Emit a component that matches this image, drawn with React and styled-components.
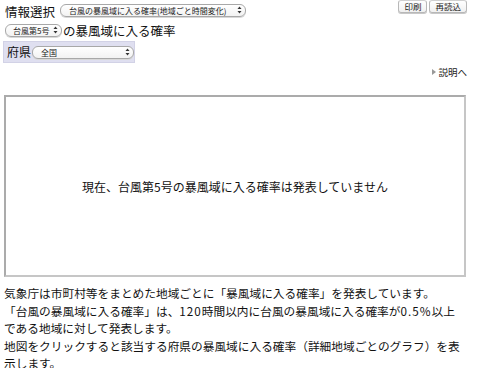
import React from "react";
import styled, { createGlobalStyle } from "styled-components";

const Global = createGlobalStyle`
  html, body { margin: 0; padding: 0; background: #fff; }
  body {
    font-family: "Noto Sans CJK JP", "Noto Sans", sans-serif;
    color: #111;
  }
`;

const Page = styled.div`
  width: 463px;
  padding: 0 0 0 4px;
  display: flex;
  flex-direction: column;
`;

const TopRow = styled.div`
  display: flex;
  align-items: center;
  height: 20px;
`;

const Title = styled.span`
  font-size: 12.5px;
  line-height: 16px;
  margin: 3px 5px 0 1px;
  white-space: nowrap;
`;

const Spacer = styled.div`
  flex: 1;
`;

const Buttons = styled.div`
  display: flex;
  gap: 2px;
  align-self: flex-start;
`;

const Btn = styled.button`
  font-family: "Noto Sans CJK JP", sans-serif;
  font-size: 8.5px;
  line-height: 11px;
  height: 13px;
  padding: 0 5px;
  border: 1px solid #b8b8b8;
  border-top-color: #d0d0d0;
  border-radius: 3px;
  background: linear-gradient(#ffffff, #f0f0f0);
  color: #222;
  box-shadow: 0 1px 0 #c8c8c8;
`;

const SelectBox = styled.div`
  display: flex;
  align-items: center;
  flex-shrink: 0;
  box-sizing: border-box;
  width: ${(p) => p.$w}px;
  height: 13px;
  padding: 0 3px 0 ${(p) => p.$pl || 8}px;
  border: 1px solid #a8a8a8;
  border-radius: 6px;
  background: linear-gradient(#ffffff, #f2f2f2);
  box-shadow: 0 1px 0 #d8d8d8;
  font-size: 8px;
  line-height: 10px;
  color: #222;
  white-space: nowrap;
`;

const SelText = styled.span`
  flex: 1;
  overflow: hidden;
  padding-top: 1px;
`;

const Arrows = () => (
  <svg width="5" height="8" viewBox="0 0 5 8">
    <path d="M0.5 3 L2.5 0.5 L4.5 3 Z" fill="#333" />
    <path d="M0.5 5 L2.5 7.5 L4.5 5 Z" fill="#333" />
  </svg>
);

const Select = ({ w, pl, children }) => (
  <SelectBox $w={w} $pl={pl}>
    <SelText>{children}</SelText>
    <Arrows />
  </SelectBox>
);

const HeadRow = styled.div`
  display: flex;
  align-items: center;
  height: 16px;
  margin-top: 2px;
  margin-left: 1px;
`;

const HeadText = styled.span`
  font-size: 12.5px;
  line-height: 16px;
  margin-left: 1px;
  padding-top: 2px;
  white-space: nowrap;
`;

const PrefBox = styled.div`
  display: flex;
  align-items: center;
  width: 132px;
  height: 22px;
  box-sizing: border-box;
  margin-top: 3px;
  margin-left: -1px;
  padding: 0 2px 0 3px;
  background: #dfdff0;
  border: 1px solid #d2d2e6;
`;

const PrefLabel = styled.span`
  font-size: 12px;
  line-height: 14px;
  margin-right: 1px;
  white-space: nowrap;
  flex-shrink: 0;
`;

const LinkRow = styled.div`
  display: flex;
  justify-content: flex-end;
  align-items: center;
  height: 13px;
  margin-top: 2px;
`;

const DescLink = styled.a`
  display: flex;
  align-items: center;
  gap: 2px;
  font-size: 9.5px;
  line-height: 12px;
  color: #222;
  text-decoration: none;
`;

const MapBox = styled.div`
  box-sizing: border-box;
  width: 462px;
  height: 182px;
  margin-top: 17px;
  border: 2px solid;
  border-color: #ababab #c6c6c6 #c6c6c6 #ababab;
  display: flex;
  align-items: center;
  justify-content: center;
  font-size: 12px;
`;

const Notes = styled.div`
  width: 458px;
  margin-top: 7px;
  font-size: 11.7px;
  line-height: 17.5px;
`;

const P = styled.p`
  margin: 0;
`;

const Num = styled.span`
  letter-spacing: 1px;
`;

export default function App() {
  return (
    <>
      <Global />
      <Page>
        <TopRow>
          <Title>情報選択</Title>
          <Select w={186}>台風の暴風域に入る確率(地域ごと時間変化)</Select>
          <Spacer />
          <Buttons>
            <Btn>印刷</Btn>
            <Btn>再読込</Btn>
          </Buttons>
        </TopRow>
        <HeadRow>
          <Select w={57} pl={7}>台風第5号</Select>
          <HeadText>の暴風域に入る確率</HeadText>
        </HeadRow>
        <PrefBox>
          <PrefLabel>府県</PrefLabel>
          <Select w={102} pl={8}>全国</Select>
        </PrefBox>
        <LinkRow>
          <DescLink href="#">
            <svg width="4" height="6" viewBox="0 0 4 6">
              <path d="M0 0 L4 3 L0 6 Z" fill="#999" />
            </svg>
            説明へ
          </DescLink>
        </LinkRow>
        <MapBox>現在、台風第5号の暴風域に入る確率は発表していません</MapBox>
        <Notes>
          <P>気象庁は市町村等をまとめた地域ごとに「暴風域に入る確率」を発表しています。</P>
          <P>
            「台風の暴風域に入る確率」は、<Num>120</Num>時間以内に台風の暴風域に入る確率が<Num>0.5%</Num>以上である地域に対して発表します。
          </P>
          <P>地図をクリックすると該当する府県の暴風域に入る確率（詳細地域ごとのグラフ）を表示します。</P>
        </Notes>
      </Page>
    </>
  );
}
